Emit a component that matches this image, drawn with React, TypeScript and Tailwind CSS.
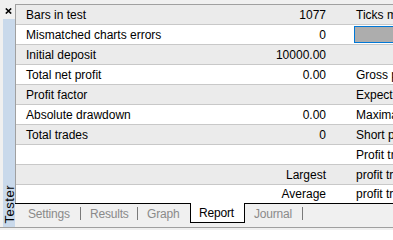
import React from 'react';

type Row = { label: string; value: string; extra: string; bar?: boolean };

const rows: Row[] = [
  { label: 'Bars in test', value: '1077', extra: 'Ticks modelled' },
  { label: 'Mismatched charts errors', value: '0', extra: '', bar: true },
  { label: 'Initial deposit', value: '10000.00', extra: '' },
  { label: 'Total net profit', value: '0.00', extra: 'Gross profit' },
  { label: 'Profit factor', value: '', extra: 'Expected payoff' },
  { label: 'Absolute drawdown', value: '0.00', extra: 'Maximal drawdown' },
  { label: 'Total trades', value: '0', extra: 'Short positions (won %)' },
  { label: '', value: '', extra: 'Profit trades (% of total)' },
  { label: '', value: 'Largest', extra: 'profit trade' },
  { label: '', value: 'Average', extra: 'profit trade' },
];

function ReportRow({ row, index }: { row: Row; index: number }) {
  const last = index === rows.length - 1;
  return (
    <div
      className={`flex items-center border-t whitespace-nowrap ${index === 0 ? 'border-[#a0a0a0]' : 'border-[#c8c8c8]'} ${last ? 'h-[19px]' : 'h-[20px]'} ${index % 2 === 0 ? 'bg-[#ebebeb]' : 'bg-white'}`}
    >
      <div className="w-[200px] shrink-0 pl-[10px]">{row.label}</div>
      <div className="w-[110px] shrink-0 text-right">{row.value}</div>
      <div className="ml-[28px] flex-1 overflow-hidden pl-[2px]">
        {row.bar ? (
          <div className="-ml-[2px] h-[17px] w-[60px] border border-[#0078d7] bg-[#adadad]" />
        ) : (
          row.extra
        )}
      </div>
    </div>
  );
}

function Tab({ label, width, active }: { label: string; width: string; active?: boolean }) {
  if (active)
    return (
      <div className="-mt-px flex h-[20px] items-center border-x border-b border-black bg-white pl-[8px] pr-[9px] text-black">
        <div className={`${width} tracking-[-0.2px]`}>{label}</div>
      </div>
    );
  return <div className={`${width} tracking-[-0.2px] text-[#8a8a8a]`}>{label}</div>;
}

function Sep() {
  return <div className="ml-[10px] mr-[9px] h-[13px] w-px bg-[#7a7a7a]" />;
}

export default function App() {
  return (
    <div
      className="flex h-[230px] w-[393px] flex-col overflow-hidden bg-[#f0f0f0] text-[12px] text-black"
      style={{ fontFamily: '"Liberation Sans", Arial, sans-serif' }}
    >
      <div className="flex h-[227px]">
        {/* side panel */}
        <div className="flex w-[15px] shrink-0 flex-col">
          <div className="flex h-[19px] items-start pl-[5px] pt-[8px]">
            <svg width="7" height="6" viewBox="0 0 7 6">
              <path d="M0.8 0.5 L6.2 5.5 M6.2 0.5 L0.8 5.5" stroke="#000" strokeWidth="1.6" />
            </svg>
          </div>
          <div className="ml-[3px] flex flex-1 items-end justify-center bg-[#c9d9eb] pb-[4px]">
            <div className="rotate-180 text-[13px] leading-[11px] tracking-[0.5px] [writing-mode:vertical-rl]">
              Tester
            </div>
          </div>
        </div>

        {/* report */}
        <div className="flex min-w-0 flex-1 flex-col pt-[4px]">
          <div className="border-l border-[#a0a0a0]">
            {rows.map((row, i) => (
              <ReportRow key={i} row={row} index={i} />
            ))}
          </div>
          <div className="flex h-[20px] items-center border-t border-black pl-[13px] whitespace-nowrap">
            <Tab label="Settings" width="w-[42px]" />
            <Sep />
            <Tab label="Results" width="w-[37px]" />
            <Sep />
            <Tab label="Graph" width="w-[32px]" />
            <div className="w-[11px]" />
            <Tab label="Report" width="w-[36px]" active />
            <div className="w-[9px]" />
            <Tab label="Journal" width="w-[38px]" />
            <Sep />
          </div>
        </div>
      </div>
      <div className="h-px bg-[#a0a0a0]" />
    </div>
  );
}
